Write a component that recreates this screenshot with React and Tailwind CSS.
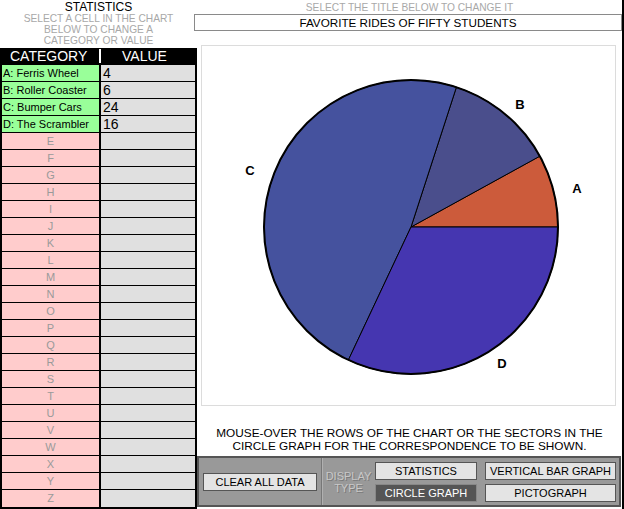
import React from "react";

const rows = [
    { label: "A: Ferris Wheel", value: "4" },
    { label: "B: Roller Coaster", value: "6" },
    { label: "C: Bumper Cars", value: "24" },
    { label: "D: The Scrambler", value: "16" },
];
const blanks = "EFGHIJKLMNOPQRSTUVWXYZ".split("");

function PieChart() {
    // centre (209,181), radius 147, sectors go anticlockwise from east
    return (
        <svg width="414" height="360" viewBox="0 0 414 360" className="block">
            <path d="M209,181 L356,181 A147,147 0 0 0 337.8,110.2 Z" fill="#cc5b3b" stroke="#000" strokeWidth="1" />
            <path d="M209,181 L337.8,110.2 A147,147 0 0 0 254.4,41.2 Z" fill="#4a4e8c" stroke="#000" strokeWidth="1" />
            <path d="M209,181 L254.4,41.2 A147,147 0 0 0 146.4,314 Z" fill="#45529e" stroke="#000" strokeWidth="1" />
            <path d="M209,181 L146.4,314 A147,147 0 0 0 356,181 Z" fill="#4536b0" stroke="#000" strokeWidth="1" />
            <circle cx="209" cy="181" r="147" fill="none" stroke="#000" strokeWidth="2" />
            <g fontFamily="'Liberation Sans', Arial, sans-serif" fontWeight="bold" fontSize="13" textAnchor="middle">
                <text x="375" y="147">A</text>
                <text x="318" y="63">B</text>
                <text x="48" y="129">C</text>
                <text x="300" y="322">D</text>
            </g>
        </svg>
    );
}

export default function App() {
    return (
        <div className="w-[624px] h-[509px] bg-white flex font-['Liberation_Sans',Arial,sans-serif] overflow-hidden">
            {/* LEFT: statistics table */}
            <div className="w-[197px] flex flex-col">
                <div className="h-[48px] flex flex-col items-center pt-[1px]">
                    <div className="text-[12px] leading-[12px] text-black">STATISTICS</div>
                    <div className="text-[10.2px] leading-[11px] text-[#a8a8a8] text-center">
                        SELECT A CELL IN THE CHART<br />BELOW TO CHANGE A<br />CATEGORY OR VALUE
                    </div>
                </div>
                <div className="flex h-[17px] bg-black text-white text-[14px] leading-[17px]">
                    <div className="w-[99px] pl-[10px]">CATEGORY</div>
                    <div className="w-[2px] h-[14px] mt-[1px] bg-white" />
                    <div className="flex-1 text-center pr-[9px]">VALUE</div>
                </div>
                <div className="flex-1 border-l-2 border-r-2 border-b-2 border-black flex flex-col">
                    {rows.map((r) => (
                        <div key={r.label} className="flex h-[17px] border-b border-black">
                            <div className="w-[97px] bg-[#99ff99] text-[11px] leading-[16px] pl-[1px] text-black">{r.label}</div>
                            <div className="w-[2px] bg-black" />
                            <div className="flex-1 bg-[#e0e0e0] text-[14px] leading-[17px] pl-[2px] text-black">{r.value}</div>
                        </div>
                    ))}
                    {blanks.map((l, i) => (
                        <div key={l} className={`flex h-[17px] ${i < blanks.length - 1 ? "border-b border-black" : ""}`}>
                            <div className="w-[97px] bg-[#ffcccc] text-[11px] leading-[16px] text-center text-[#9a9a9a]">{l}</div>
                            <div className="w-[2px] bg-black" />
                            <div className="flex-1 bg-[#e0e0e0]" />
                        </div>
                    ))}
                </div>
            </div>

            {/* RIGHT: title, chart, controls */}
            <div className="flex-1 flex flex-col border-r-2 border-black">
                <div className="text-[10.2px] leading-[12px] text-[#a8a8a8] text-center pt-[2px]">SELECT THE TITLE BELOW TO CHANGE IT</div>
                <div className="-ml-[3px] h-[17px] border border-[#8a8a8a] text-[11.7px] leading-[15px] text-center text-black">
                    FAVORITE RIDES OF FIFTY STUDENTS
                </div>
                <div className="ml-[4px] mt-[14px] w-[415px] h-[361px] border border-[#dcdcdc]">
                    <PieChart />
                </div>
                <div className="mt-[21px] text-[11.8px] leading-[12.5px] text-center text-black">
                    <div>MOUSE-OVER THE ROWS OF THE CHART OR THE SECTORS IN THE</div>
                    <div>CIRCLE GRAPH FOR THE CORRESPONDENCE TO BE SHOWN.</div>
                </div>
                <div className="mt-[4px] h-[51px] mr-[1px] bg-[#999999] border-2 border-[#555555] flex">
                    <div className="w-[123px] flex items-center justify-center border-r border-[#777777]">
                        <div className="w-[114px] h-[18px] bg-[#e4e4e4] border border-[#555555] text-[11px] leading-[16px] text-center text-black">CLEAR ALL DATA</div>
                    </div>
                    <div className="w-[52px] flex items-center justify-center border-l border-[#b0b0b0]">
                        <div className="text-[11px] leading-[12px] text-center text-[#c8c8c8] [text-shadow:1px_1px_0_#7a7a7a]">DISPLAY<br />TYPE</div>
                    </div>
                    <div className="flex-1 grid grid-cols-[102px_131px] gap-x-[8px] gap-y-[4px] content-center pl-[1px]">
                        <div className="h-[18px] bg-[#e4e4e4] border border-[#555555] text-[11px] leading-[16px] text-center text-black">STATISTICS</div>
                        <div className="h-[18px] bg-[#e4e4e4] border border-[#555555] text-[11px] leading-[16px] text-center text-black">VERTICAL BAR GRAPH</div>
                        <div className="h-[18px] bg-[#555555] border border-[#888888] text-[11px] leading-[16px] text-center text-white">CIRCLE GRAPH</div>
                        <div className="h-[18px] bg-[#e4e4e4] border border-[#555555] text-[11px] leading-[16px] text-center text-black">PICTOGRAPH</div>
                    </div>
                </div>
            </div>
        </div>
    );
}
